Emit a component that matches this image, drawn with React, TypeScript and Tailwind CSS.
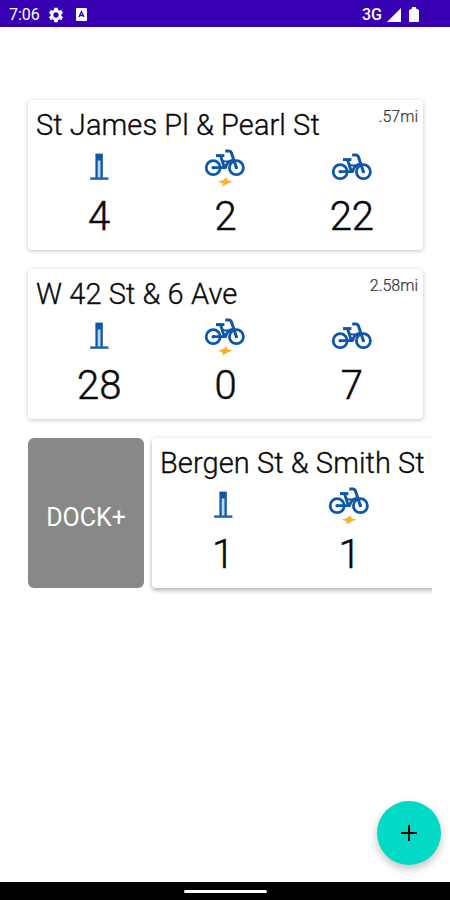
import React from 'react';

interface Station {
  name: string;
  distance?: string;
  docks: number;
  ebikes: number;
  bikes?: number;
}

const STATIONS: Station[] = [
  { name: 'St James Pl & Pearl St', distance: '.57mi', docks: 4, ebikes: 2, bikes: 22 },
  { name: 'W 42 St & 6 Ave', distance: '2.58mi', docks: 28, ebikes: 0, bikes: 7 },
];

const SWIPED: Station = { name: 'Bergen St & Smith St', docks: 1, ebikes: 1 };

const DockIcon = () => (
  <svg className="w-5 h-7" viewBox="0 0 20 28" fill="none">
    <path d="M6.4 .6H13.8V25H6.4z" fill="#0f57a8" />
    <path d="M8.7 7.5H11.5V25H8.7z" fill="#b9d9f3" />
    <path d="M1.2 25.6H19.4" stroke="#1a60ad" strokeWidth="2.4" />
  </svg>
);

const BikeIcon = () => (
  <svg className="w-[42px] h-7" viewBox="0 0 42 28" fill="none" stroke="#0f57a8" strokeWidth="2.8" strokeLinejoin="round">
    <circle cx="9.2" cy="18.7" r="7" />
    <circle cx="32.4" cy="18.7" r="7" />
    <path d="M9.2 18.7H21.6c1.2-5.2 4-7.4 8-7.6" />
    <path d="M16.6 7L20.4 18.7" />
    <path d="M17.8 10.8c1.2 1.6 3 2 5.4 1.6H30" strokeWidth="2" />
    <path d="M12 6.6H20.4" strokeWidth="3" />
    <path d="M21.2 2H25.2Q26.8 2 27.3 3.6L32.4 18.7" strokeWidth="3" />
    <circle cx="9.2" cy="18.7" r="1.8" fill="#0f57a8" stroke="none" />
    <circle cx="32.4" cy="18.7" r="1.6" fill="#0f57a8" stroke="none" />
  </svg>
);

const BoltIcon = () => (
  <svg className="w-4 h-2.5" viewBox="0 0 16 10" fill="#fbb02d">
    <path d="M10.2 .2L10.4 3.2 15.4 4.4 10.8 6.4 5.4 9.6 5.8 6.6.8 4.8 5.6 3.2z" />
  </svg>
);

const Count = ({ icon, value }: { icon: React.ReactNode; value: number }) => (
  <div className="flex flex-1 flex-col items-center">
    <div className="flex h-[45px] flex-col items-center">{icon}</div>
    <span className="text-[40px] leading-[47px] font-light [-webkit-text-stroke:0.5px_#0a0a0a]">{value}</span>
  </div>
);

const StationCard = ({ station }: { station: Station }) => (
  <div className="w-[395px] h-[150px] shrink-0 rounded bg-white shadow-[0_1px_4px_rgba(0,0,0,0.24)]">
    <div className="flex h-12 justify-between pl-2 pr-[5px]">
      <h2 className="pt-2 text-[29px] leading-[34px] font-light tracking-[0.08px] whitespace-nowrap [-webkit-text-stroke:0.35px_#0a0a0a]">
        {station.name}
      </h2>
      {station.distance && (
        <span className="pt-[7px] text-[16px] leading-[19px] font-light text-[#333333] [-webkit-text-stroke:0.2px_#333333]">
          {station.distance}
        </span>
      )}
    </div>
    <div className="flex px-2">
      <Count icon={<div className="pt-[5px]"><DockIcon /></div>} value={station.docks} />
      <Count icon={<div className="flex flex-col items-center pt-px"><BikeIcon /><BoltIcon /></div>} value={station.ebikes} />
      {station.bikes !== undefined ? (
        <Count icon={<div className="pt-[5px]"><BikeIcon /></div>} value={station.bikes} />
      ) : (
        <div className="flex-1"></div>
      )}
    </div>
  </div>
);

const StatusBar = () => (
  <header className="flex h-[27px] items-center bg-[#3700b3] pl-[9px] pr-[31px] pt-0.5 text-white">
    <span className="text-[16px] leading-none">7:06</span>
    <svg className="ml-[7px] h-[18px] w-[18px]" viewBox="0 0 24 24" fill="currentColor">
      <path d="M19.14 12.94c.04-.3.06-.61.06-.94 0-.32-.02-.64-.07-.94l2.03-1.58a.49.49 0 0 0 .12-.61l-1.92-3.32a.49.49 0 0 0-.59-.22l-2.39.96c-.5-.38-1.03-.7-1.62-.94l-.36-2.54a.48.48 0 0 0-.48-.41h-3.84a.47.47 0 0 0-.47.41l-.36 2.54c-.59.24-1.13.57-1.62.94l-2.39-.96a.48.48 0 0 0-.59.22L2.74 8.87a.47.47 0 0 0 .12.61l2.03 1.58c-.05.3-.09.63-.09.94s.02.64.07.94l-2.03 1.58a.49.49 0 0 0-.12.61l1.92 3.32c.12.22.37.29.59.22l2.39-.96c.5.38 1.03.7 1.62.94l.36 2.54c.05.24.24.41.48.41h3.84c.24 0 .44-.17.47-.41l.36-2.54c.59-.24 1.13-.56 1.62-.94l2.39.96c.22.08.47 0 .59-.22l1.92-3.32a.47.47 0 0 0-.12-.61zM12 15.6A3.6 3.6 0 1 1 12 8.4a3.6 3.6 0 0 1 0 7.2z" />
    </svg>
    <svg className="ml-[11px] h-[13px] w-[11px]" viewBox="0 0 11 13" fill="none">
      <rect width="11" height="13" rx="1" fill="white" />
      <path d="M3 9L5.5 3.5 8 9M4 7.5H7" stroke="#3700b3" strokeWidth="1.3" />
    </svg>
    <span className="ml-auto text-[16px] leading-none font-medium">3G</span>
    <svg className="ml-[5px] h-3.5 w-3.5" viewBox="0 0 14 14" fill="currentColor">
      <path d="M14 0V14H0z" />
    </svg>
    <svg className="ml-2 h-[15px] w-2.5" viewBox="0 0 10 15" fill="currentColor">
      <path d="M3 0H7V1.5L10 3V14q0 1-1 1H1q-1 0-1-1V3L3 1.5z" />
    </svg>
  </header>
);

const App: React.FC = () => {
  return (
    <div className="relative flex h-[900px] w-[450px] flex-col overflow-hidden bg-white font-['Roboto',sans-serif] text-[#0a0a0a]">
      <StatusBar />

      <main className="flex flex-1 flex-col gap-[19px] pl-7 pt-[73px]">
        {STATIONS.map((s) => (
          <StationCard key={s.name} station={s} />
        ))}
        <div className="-mt-1 -ml-1 flex w-[408px] gap-2 overflow-hidden pt-1 pb-3 pl-1">
          <button className="h-[150px] w-[116px] shrink-0 rounded-md bg-[#888888] pt-2.5 text-[25px] font-normal text-white">
            DOCK+
          </button>
          <div className="h-[150px] shrink-0 rounded shadow-[0_4px_4px_rgba(0,0,0,0.12)]">
            <StationCard station={SWIPED} />
          </div>
        </div>
      </main>

      <button className="absolute left-[377px] top-[801px] flex h-16 w-16 items-center justify-center rounded-full bg-[#03dac5] shadow-[0_4px_8px_rgba(0,0,0,0.24)]">
        <svg className="h-4 w-4" viewBox="0 0 16 16" stroke="black" strokeWidth="2">
          <path d="M8 0V16M0 8H16" />
        </svg>
      </button>

      <footer className="flex h-[18px] items-center justify-center bg-black pt-px">
        <div className="h-[3px] w-[83px] rounded-full bg-white"></div>
      </footer>
    </div>
  );
};

export default App;
